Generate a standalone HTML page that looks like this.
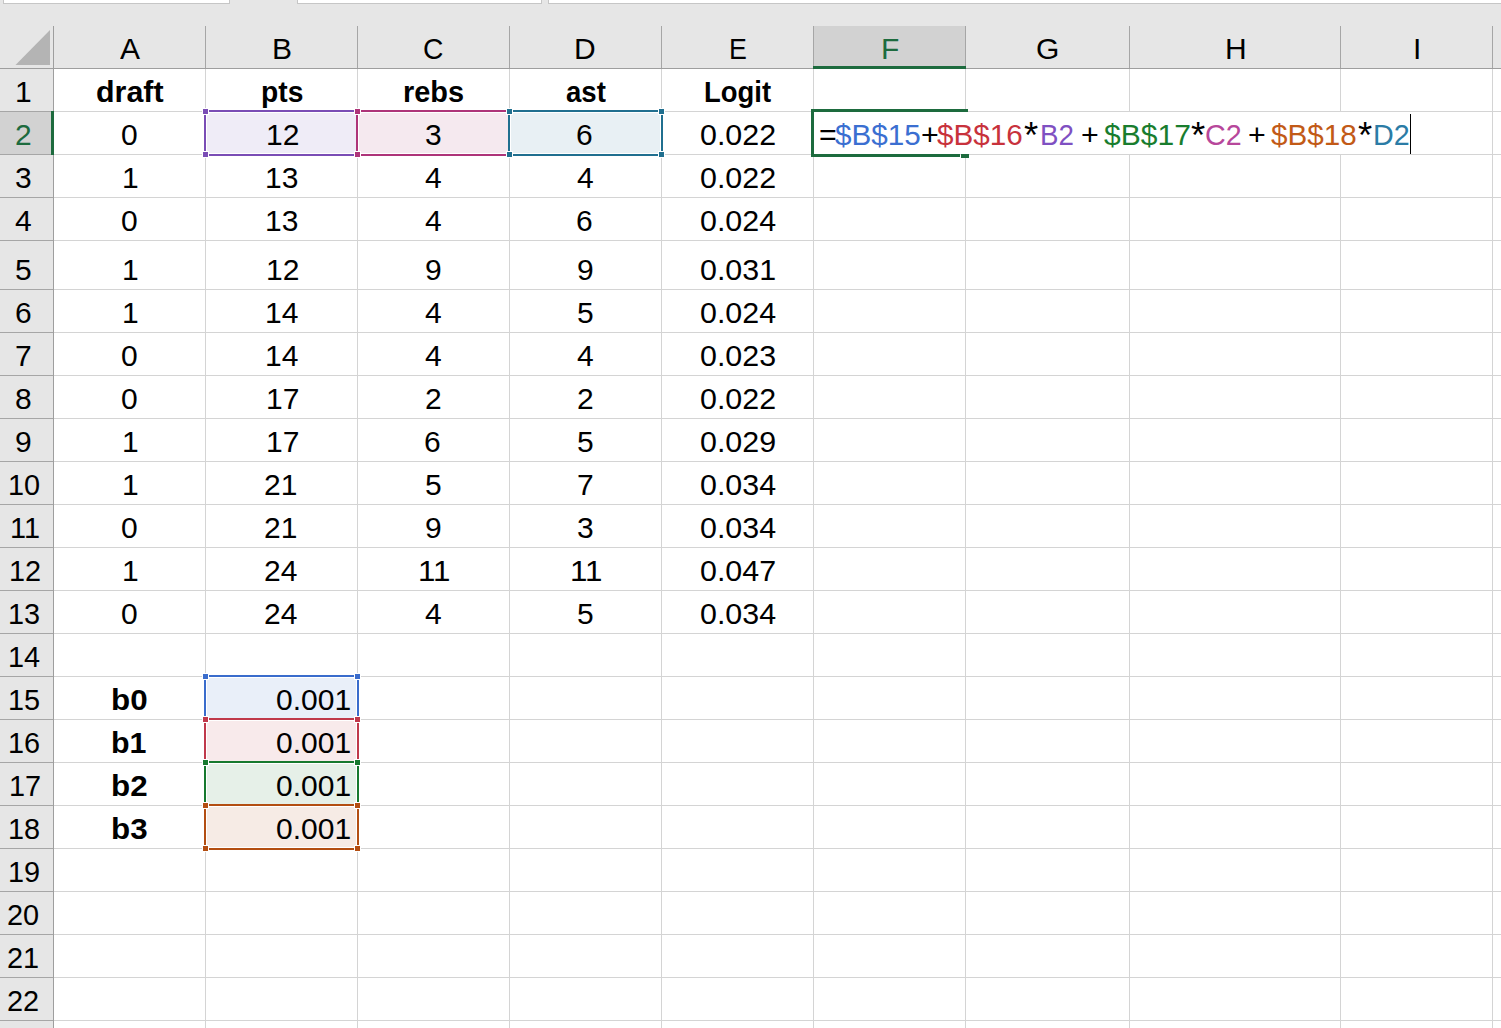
<!DOCTYPE html><html><head><meta charset="utf-8"><style>
*{margin:0;padding:0;box-sizing:border-box}
html,body{width:1501px;height:1028px;overflow:hidden;background:#fff;color:#000;font-family:"Liberation Sans", sans-serif}
div{position:absolute}
.t{font-size:30.4px;line-height:30.4px;white-space:nowrap}
.t span{display:inline-block}
.b{font-weight:bold}
</style></head><body>
<div style="left:0;top:0;width:1501px;height:68px;background:#e6e6e6"></div>
<div style="left:0;top:68px;width:53px;height:960px;background:#e6e6e6"></div>
<div style="left:3px;top:-2px;width:227px;height:6px;background:#fff;border:1px solid #c6c6c6"></div>
<div style="left:297px;top:-2px;width:245px;height:6px;background:#fff;border:1px solid #c6c6c6"></div>
<div style="left:548px;top:-2px;width:973px;height:6px;background:#fff;border:1px solid #c6c6c6"></div>
<div style="left:814px;top:26px;width:151px;height:40px;background:#d2d2d2"></div>
<div style="left:0;top:112px;width:53px;height:42px;background:#d2d2d2"></div>
<div style="left:54px;top:111px;width:1447px;height:1px;background:#d4d4d4"></div>
<div style="left:54px;top:154px;width:1447px;height:1px;background:#d4d4d4"></div>
<div style="left:54px;top:197px;width:1447px;height:1px;background:#d4d4d4"></div>
<div style="left:54px;top:240px;width:1447px;height:1px;background:#d4d4d4"></div>
<div style="left:54px;top:289px;width:1447px;height:1px;background:#d4d4d4"></div>
<div style="left:54px;top:332px;width:1447px;height:1px;background:#d4d4d4"></div>
<div style="left:54px;top:375px;width:1447px;height:1px;background:#d4d4d4"></div>
<div style="left:54px;top:418px;width:1447px;height:1px;background:#d4d4d4"></div>
<div style="left:54px;top:461px;width:1447px;height:1px;background:#d4d4d4"></div>
<div style="left:54px;top:504px;width:1447px;height:1px;background:#d4d4d4"></div>
<div style="left:54px;top:547px;width:1447px;height:1px;background:#d4d4d4"></div>
<div style="left:54px;top:590px;width:1447px;height:1px;background:#d4d4d4"></div>
<div style="left:54px;top:633px;width:1447px;height:1px;background:#d4d4d4"></div>
<div style="left:54px;top:676px;width:1447px;height:1px;background:#d4d4d4"></div>
<div style="left:54px;top:719px;width:1447px;height:1px;background:#d4d4d4"></div>
<div style="left:54px;top:762px;width:1447px;height:1px;background:#d4d4d4"></div>
<div style="left:54px;top:805px;width:1447px;height:1px;background:#d4d4d4"></div>
<div style="left:54px;top:848px;width:1447px;height:1px;background:#d4d4d4"></div>
<div style="left:54px;top:891px;width:1447px;height:1px;background:#d4d4d4"></div>
<div style="left:54px;top:934px;width:1447px;height:1px;background:#d4d4d4"></div>
<div style="left:54px;top:977px;width:1447px;height:1px;background:#d4d4d4"></div>
<div style="left:54px;top:1020px;width:1447px;height:1px;background:#d4d4d4"></div>
<div style="left:205px;top:69px;width:1px;height:959px;background:#d4d4d4"></div>
<div style="left:357px;top:69px;width:1px;height:959px;background:#d4d4d4"></div>
<div style="left:509px;top:69px;width:1px;height:959px;background:#d4d4d4"></div>
<div style="left:661px;top:69px;width:1px;height:959px;background:#d4d4d4"></div>
<div style="left:813px;top:69px;width:1px;height:959px;background:#d4d4d4"></div>
<div style="left:965px;top:69px;width:1px;height:42px;background:#d4d4d4"></div>
<div style="left:965px;top:155px;width:1px;height:873px;background:#d4d4d4"></div>
<div style="left:1129px;top:69px;width:1px;height:42px;background:#d4d4d4"></div>
<div style="left:1129px;top:155px;width:1px;height:873px;background:#d4d4d4"></div>
<div style="left:1340px;top:69px;width:1px;height:42px;background:#d4d4d4"></div>
<div style="left:1340px;top:155px;width:1px;height:873px;background:#d4d4d4"></div>
<div style="left:1492px;top:69px;width:1px;height:959px;background:#d4d4d4"></div>
<div style="left:205px;top:26px;width:1px;height:42px;background:#a6a6a6"></div>
<div style="left:357px;top:26px;width:1px;height:42px;background:#a6a6a6"></div>
<div style="left:509px;top:26px;width:1px;height:42px;background:#a6a6a6"></div>
<div style="left:661px;top:26px;width:1px;height:42px;background:#a6a6a6"></div>
<div style="left:813px;top:26px;width:1px;height:42px;background:#a6a6a6"></div>
<div style="left:965px;top:26px;width:1px;height:42px;background:#a6a6a6"></div>
<div style="left:1129px;top:26px;width:1px;height:42px;background:#a6a6a6"></div>
<div style="left:1340px;top:26px;width:1px;height:42px;background:#a6a6a6"></div>
<div style="left:1492px;top:26px;width:1px;height:42px;background:#a6a6a6"></div>
<div style="left:0;top:111px;width:53px;height:1px;background:#a6a6a6"></div>
<div style="left:0;top:154px;width:53px;height:1px;background:#a6a6a6"></div>
<div style="left:0;top:197px;width:53px;height:1px;background:#a6a6a6"></div>
<div style="left:0;top:240px;width:53px;height:1px;background:#a6a6a6"></div>
<div style="left:0;top:289px;width:53px;height:1px;background:#a6a6a6"></div>
<div style="left:0;top:332px;width:53px;height:1px;background:#a6a6a6"></div>
<div style="left:0;top:375px;width:53px;height:1px;background:#a6a6a6"></div>
<div style="left:0;top:418px;width:53px;height:1px;background:#a6a6a6"></div>
<div style="left:0;top:461px;width:53px;height:1px;background:#a6a6a6"></div>
<div style="left:0;top:504px;width:53px;height:1px;background:#a6a6a6"></div>
<div style="left:0;top:547px;width:53px;height:1px;background:#a6a6a6"></div>
<div style="left:0;top:590px;width:53px;height:1px;background:#a6a6a6"></div>
<div style="left:0;top:633px;width:53px;height:1px;background:#a6a6a6"></div>
<div style="left:0;top:676px;width:53px;height:1px;background:#a6a6a6"></div>
<div style="left:0;top:719px;width:53px;height:1px;background:#a6a6a6"></div>
<div style="left:0;top:762px;width:53px;height:1px;background:#a6a6a6"></div>
<div style="left:0;top:805px;width:53px;height:1px;background:#a6a6a6"></div>
<div style="left:0;top:848px;width:53px;height:1px;background:#a6a6a6"></div>
<div style="left:0;top:891px;width:53px;height:1px;background:#a6a6a6"></div>
<div style="left:0;top:934px;width:53px;height:1px;background:#a6a6a6"></div>
<div style="left:0;top:977px;width:53px;height:1px;background:#a6a6a6"></div>
<div style="left:0;top:1020px;width:53px;height:1px;background:#a6a6a6"></div>
<div style="left:0;top:68px;width:1501px;height:1px;background:#9e9e9e"></div>
<div style="left:53px;top:26px;width:1px;height:1002px;background:#9e9e9e"></div>
<svg style="position:absolute;left:0;top:0" width="60" height="70"><polygon points="15.5,65 50,65 50,30" fill="#b4b4b4"/></svg>
<div style="left:813px;top:66px;width:153px;height:3px;background:#1d6b3e"></div>
<div style="left:51px;top:111px;width:3px;height:44px;background:#1d6b3e"></div>
<div style="left:206px;top:112px;width:151px;height:42px;background:#fff"></div>
<div style="left:207px;top:113px;width:149px;height:40px;background:#efecf7"></div>
<div style="left:204px;top:110px;width:155px;height:46px;border:2px solid #7a4db5"></div>
<div style="left:202px;top:108px;width:7px;height:7px;background:#fff"></div>
<div style="left:203px;top:109px;width:5px;height:5px;background:#7a4db5"></div>
<div style="left:354px;top:108px;width:7px;height:7px;background:#fff"></div>
<div style="left:355px;top:109px;width:5px;height:5px;background:#7a4db5"></div>
<div style="left:202px;top:151px;width:7px;height:7px;background:#fff"></div>
<div style="left:203px;top:152px;width:5px;height:5px;background:#7a4db5"></div>
<div style="left:354px;top:151px;width:7px;height:7px;background:#fff"></div>
<div style="left:355px;top:152px;width:5px;height:5px;background:#7a4db5"></div>
<div style="left:358px;top:112px;width:151px;height:42px;background:#fff"></div>
<div style="left:359px;top:113px;width:149px;height:40px;background:#f5e9ef"></div>
<div style="left:356px;top:110px;width:155px;height:46px;border:2px solid #ae3479"></div>
<div style="left:354px;top:108px;width:7px;height:7px;background:#fff"></div>
<div style="left:355px;top:109px;width:5px;height:5px;background:#ae3479"></div>
<div style="left:506px;top:108px;width:7px;height:7px;background:#fff"></div>
<div style="left:507px;top:109px;width:5px;height:5px;background:#ae3479"></div>
<div style="left:354px;top:151px;width:7px;height:7px;background:#fff"></div>
<div style="left:355px;top:152px;width:5px;height:5px;background:#ae3479"></div>
<div style="left:506px;top:151px;width:7px;height:7px;background:#fff"></div>
<div style="left:507px;top:152px;width:5px;height:5px;background:#ae3479"></div>
<div style="left:510px;top:112px;width:151px;height:42px;background:#fff"></div>
<div style="left:511px;top:113px;width:149px;height:40px;background:#e8f0f4"></div>
<div style="left:508px;top:110px;width:155px;height:46px;border:2px solid #206f8f"></div>
<div style="left:506px;top:108px;width:7px;height:7px;background:#fff"></div>
<div style="left:507px;top:109px;width:5px;height:5px;background:#206f8f"></div>
<div style="left:658px;top:108px;width:7px;height:7px;background:#fff"></div>
<div style="left:659px;top:109px;width:5px;height:5px;background:#206f8f"></div>
<div style="left:506px;top:151px;width:7px;height:7px;background:#fff"></div>
<div style="left:507px;top:152px;width:5px;height:5px;background:#206f8f"></div>
<div style="left:658px;top:151px;width:7px;height:7px;background:#fff"></div>
<div style="left:659px;top:152px;width:5px;height:5px;background:#206f8f"></div>
<div style="left:206px;top:677px;width:151px;height:42px;background:#fff"></div>
<div style="left:207px;top:678px;width:149px;height:40px;background:#e9eff9"></div>
<div style="left:204px;top:675px;width:155px;height:46px;border:2px solid #3a6ccc"></div>
<div style="left:202px;top:673px;width:7px;height:7px;background:#fff"></div>
<div style="left:203px;top:674px;width:5px;height:5px;background:#3a6ccc"></div>
<div style="left:354px;top:673px;width:7px;height:7px;background:#fff"></div>
<div style="left:355px;top:674px;width:5px;height:5px;background:#3a6ccc"></div>
<div style="left:202px;top:716px;width:7px;height:7px;background:#fff"></div>
<div style="left:203px;top:717px;width:5px;height:5px;background:#3a6ccc"></div>
<div style="left:354px;top:716px;width:7px;height:7px;background:#fff"></div>
<div style="left:355px;top:717px;width:5px;height:5px;background:#3a6ccc"></div>
<div style="left:206px;top:720px;width:151px;height:42px;background:#fff"></div>
<div style="left:207px;top:721px;width:149px;height:40px;background:#f8eaeb"></div>
<div style="left:204px;top:718px;width:155px;height:46px;border:2px solid #c0394b"></div>
<div style="left:202px;top:716px;width:7px;height:7px;background:#fff"></div>
<div style="left:203px;top:717px;width:5px;height:5px;background:#c0394b"></div>
<div style="left:354px;top:716px;width:7px;height:7px;background:#fff"></div>
<div style="left:355px;top:717px;width:5px;height:5px;background:#c0394b"></div>
<div style="left:202px;top:759px;width:7px;height:7px;background:#fff"></div>
<div style="left:203px;top:760px;width:5px;height:5px;background:#c0394b"></div>
<div style="left:354px;top:759px;width:7px;height:7px;background:#fff"></div>
<div style="left:355px;top:760px;width:5px;height:5px;background:#c0394b"></div>
<div style="left:206px;top:763px;width:151px;height:42px;background:#fff"></div>
<div style="left:207px;top:764px;width:149px;height:40px;background:#e6f0e8"></div>
<div style="left:204px;top:761px;width:155px;height:46px;border:2px solid #17792e"></div>
<div style="left:202px;top:759px;width:7px;height:7px;background:#fff"></div>
<div style="left:203px;top:760px;width:5px;height:5px;background:#17792e"></div>
<div style="left:354px;top:759px;width:7px;height:7px;background:#fff"></div>
<div style="left:355px;top:760px;width:5px;height:5px;background:#17792e"></div>
<div style="left:202px;top:802px;width:7px;height:7px;background:#fff"></div>
<div style="left:203px;top:803px;width:5px;height:5px;background:#17792e"></div>
<div style="left:354px;top:802px;width:7px;height:7px;background:#fff"></div>
<div style="left:355px;top:803px;width:5px;height:5px;background:#17792e"></div>
<div style="left:206px;top:806px;width:151px;height:42px;background:#fff"></div>
<div style="left:207px;top:807px;width:149px;height:40px;background:#f6ebe5"></div>
<div style="left:204px;top:804px;width:155px;height:46px;border:2px solid #b34e12"></div>
<div style="left:202px;top:802px;width:7px;height:7px;background:#fff"></div>
<div style="left:203px;top:803px;width:5px;height:5px;background:#b34e12"></div>
<div style="left:354px;top:802px;width:7px;height:7px;background:#fff"></div>
<div style="left:355px;top:803px;width:5px;height:5px;background:#b34e12"></div>
<div style="left:202px;top:845px;width:7px;height:7px;background:#fff"></div>
<div style="left:203px;top:846px;width:5px;height:5px;background:#b34e12"></div>
<div style="left:354px;top:845px;width:7px;height:7px;background:#fff"></div>
<div style="left:355px;top:846px;width:5px;height:5px;background:#b34e12"></div>
<div style="left:119.63px;top:33px;transform:scaleX(0.987);transform-origin:0 0;color:#000"><span class="t">A</span></div>
<div style="left:271.64px;top:33px;transform:scaleX(0.987);transform-origin:0 0;color:#000"><span class="t">B</span></div>
<div style="left:423.31px;top:33px;transform:scaleX(0.93);transform-origin:0 0;color:#000"><span class="t">C</span></div>
<div style="left:574.15px;top:33px;transform:scaleX(0.987);transform-origin:0 0;color:#000"><span class="t">D</span></div>
<div style="left:729.26px;top:33px;transform:scaleX(0.88);transform-origin:0 0;color:#000"><span class="t">E</span></div>
<div style="left:880.62px;top:33px;transform:scaleX(0.987);transform-origin:0 0;color:#1d6b3e"><span class="t">F</span></div>
<div style="left:1036.15px;top:33px;transform:scaleX(0.987);transform-origin:0 0;color:#000"><span class="t">G</span></div>
<div style="left:1224.64px;top:33px;transform:scaleX(0.987);transform-origin:0 0;color:#000"><span class="t">H</span></div>
<div style="left:1412.56px;top:33px;transform:scaleX(0.987);transform-origin:0 0;color:#000"><span class="t">I</span></div>
<div style="left:14.62px;top:76px;transform:scaleX(0.987);transform-origin:0 0;color:#000"><span class="t">1</span></div>
<div style="left:15.11px;top:119px;transform:scaleX(0.987);transform-origin:0 0;color:#1d6b3e"><span class="t">2</span></div>
<div style="left:15.11px;top:162px;transform:scaleX(0.987);transform-origin:0 0;color:#000"><span class="t">3</span></div>
<div style="left:15.11px;top:205px;transform:scaleX(0.987);transform-origin:0 0;color:#000"><span class="t">4</span></div>
<div style="left:15.11px;top:254px;transform:scaleX(0.987);transform-origin:0 0;color:#000"><span class="t">5</span></div>
<div style="left:14.62px;top:297px;transform:scaleX(0.987);transform-origin:0 0;color:#000"><span class="t">6</span></div>
<div style="left:15.11px;top:340px;transform:scaleX(0.987);transform-origin:0 0;color:#000"><span class="t">7</span></div>
<div style="left:15.11px;top:383px;transform:scaleX(0.987);transform-origin:0 0;color:#000"><span class="t">8</span></div>
<div style="left:15.11px;top:426px;transform:scaleX(0.987);transform-origin:0 0;color:#000"><span class="t">9</span></div>
<div style="left:8.38px;top:469px;transform:scaleX(0.95);transform-origin:0 0;color:#000"><span class="t">10</span></div>
<div style="left:9.80px;top:512px;transform:scaleX(0.95);transform-origin:0 0;color:#000"><span class="t">11</span></div>
<div style="left:8.85px;top:555px;transform:scaleX(0.95);transform-origin:0 0;color:#000"><span class="t">12</span></div>
<div style="left:8.38px;top:598px;transform:scaleX(0.95);transform-origin:0 0;color:#000"><span class="t">13</span></div>
<div style="left:8.38px;top:641px;transform:scaleX(0.95);transform-origin:0 0;color:#000"><span class="t">14</span></div>
<div style="left:8.38px;top:684px;transform:scaleX(0.95);transform-origin:0 0;color:#000"><span class="t">15</span></div>
<div style="left:8.38px;top:727px;transform:scaleX(0.95);transform-origin:0 0;color:#000"><span class="t">16</span></div>
<div style="left:8.85px;top:770px;transform:scaleX(0.95);transform-origin:0 0;color:#000"><span class="t">17</span></div>
<div style="left:8.38px;top:813px;transform:scaleX(0.95);transform-origin:0 0;color:#000"><span class="t">18</span></div>
<div style="left:8.38px;top:856px;transform:scaleX(0.95);transform-origin:0 0;color:#000"><span class="t">19</span></div>
<div style="left:6.62px;top:899px;transform:scaleX(0.95);transform-origin:0 0;color:#000"><span class="t">20</span></div>
<div style="left:6.62px;top:942px;transform:scaleX(0.95);transform-origin:0 0;color:#000"><span class="t">21</span></div>
<div style="left:7.10px;top:985px;transform:scaleX(0.95);transform-origin:0 0;color:#000"><span class="t">22</span></div>
<div style="left:96.00px;top:76px;transform:scale(1.0000,1.0);transform-origin:0 0;color:#000"><span class="t b">draft</span></div>
<div style="left:261.14px;top:76px;transform:scale(0.9286,1.0);transform-origin:0 0;color:#000"><span class="t b">pts</span></div>
<div style="left:403.10px;top:76px;transform:scale(0.9508,1.0);transform-origin:0 0;color:#000"><span class="t b">rebs</span></div>
<div style="left:566.09px;top:76px;transform:scale(0.9070,1.0);transform-origin:0 0;color:#000"><span class="t b">ast</span></div>
<div style="left:704.19px;top:76px;transform:scale(0.9028,1.0);transform-origin:0 0;color:#000"><span class="t b">Logit</span></div>
<div style="left:120.61px;top:119px;transform:scaleX(0.987);transform-origin:0 0;color:#000"><span class="t">0</span></div>
<div style="left:265.72px;top:119px;transform:scaleX(0.987);transform-origin:0 0;color:#000"><span class="t">12</span></div>
<div style="left:424.61px;top:119px;transform:scaleX(0.987);transform-origin:0 0;color:#000"><span class="t">3</span></div>
<div style="left:576.12px;top:119px;transform:scaleX(0.987);transform-origin:0 0;color:#000"><span class="t">6</span></div>
<div style="left:700.00px;top:119px;transform:scaleX(1.0);transform-origin:0 0;color:#000"><span class="t">0.022</span></div>
<div style="left:121.62px;top:162px;transform:scaleX(0.987);transform-origin:0 0;color:#000"><span class="t">1</span></div>
<div style="left:265.23px;top:162px;transform:scaleX(0.987);transform-origin:0 0;color:#000"><span class="t">13</span></div>
<div style="left:424.61px;top:162px;transform:scaleX(0.987);transform-origin:0 0;color:#000"><span class="t">4</span></div>
<div style="left:576.61px;top:162px;transform:scaleX(0.987);transform-origin:0 0;color:#000"><span class="t">4</span></div>
<div style="left:700.00px;top:162px;transform:scaleX(1.0);transform-origin:0 0;color:#000"><span class="t">0.022</span></div>
<div style="left:120.61px;top:205px;transform:scaleX(0.987);transform-origin:0 0;color:#000"><span class="t">0</span></div>
<div style="left:265.23px;top:205px;transform:scaleX(0.987);transform-origin:0 0;color:#000"><span class="t">13</span></div>
<div style="left:424.61px;top:205px;transform:scaleX(0.987);transform-origin:0 0;color:#000"><span class="t">4</span></div>
<div style="left:576.12px;top:205px;transform:scaleX(0.987);transform-origin:0 0;color:#000"><span class="t">6</span></div>
<div style="left:700.00px;top:205px;transform:scaleX(1.0);transform-origin:0 0;color:#000"><span class="t">0.024</span></div>
<div style="left:121.62px;top:254px;transform:scaleX(0.987);transform-origin:0 0;color:#000"><span class="t">1</span></div>
<div style="left:265.72px;top:254px;transform:scaleX(0.987);transform-origin:0 0;color:#000"><span class="t">12</span></div>
<div style="left:424.61px;top:254px;transform:scaleX(0.987);transform-origin:0 0;color:#000"><span class="t">9</span></div>
<div style="left:576.61px;top:254px;transform:scaleX(0.987);transform-origin:0 0;color:#000"><span class="t">9</span></div>
<div style="left:700.00px;top:254px;transform:scaleX(1.0);transform-origin:0 0;color:#000"><span class="t">0.031</span></div>
<div style="left:121.62px;top:297px;transform:scaleX(0.987);transform-origin:0 0;color:#000"><span class="t">1</span></div>
<div style="left:265.23px;top:297px;transform:scaleX(0.987);transform-origin:0 0;color:#000"><span class="t">14</span></div>
<div style="left:424.61px;top:297px;transform:scaleX(0.987);transform-origin:0 0;color:#000"><span class="t">4</span></div>
<div style="left:576.61px;top:297px;transform:scaleX(0.987);transform-origin:0 0;color:#000"><span class="t">5</span></div>
<div style="left:700.00px;top:297px;transform:scaleX(1.0);transform-origin:0 0;color:#000"><span class="t">0.024</span></div>
<div style="left:120.61px;top:340px;transform:scaleX(0.987);transform-origin:0 0;color:#000"><span class="t">0</span></div>
<div style="left:265.23px;top:340px;transform:scaleX(0.987);transform-origin:0 0;color:#000"><span class="t">14</span></div>
<div style="left:424.61px;top:340px;transform:scaleX(0.987);transform-origin:0 0;color:#000"><span class="t">4</span></div>
<div style="left:576.61px;top:340px;transform:scaleX(0.987);transform-origin:0 0;color:#000"><span class="t">4</span></div>
<div style="left:700.00px;top:340px;transform:scaleX(1.0);transform-origin:0 0;color:#000"><span class="t">0.023</span></div>
<div style="left:120.61px;top:383px;transform:scaleX(0.987);transform-origin:0 0;color:#000"><span class="t">0</span></div>
<div style="left:265.72px;top:383px;transform:scaleX(0.987);transform-origin:0 0;color:#000"><span class="t">17</span></div>
<div style="left:424.61px;top:383px;transform:scaleX(0.987);transform-origin:0 0;color:#000"><span class="t">2</span></div>
<div style="left:576.61px;top:383px;transform:scaleX(0.987);transform-origin:0 0;color:#000"><span class="t">2</span></div>
<div style="left:700.00px;top:383px;transform:scaleX(1.0);transform-origin:0 0;color:#000"><span class="t">0.022</span></div>
<div style="left:121.62px;top:426px;transform:scaleX(0.987);transform-origin:0 0;color:#000"><span class="t">1</span></div>
<div style="left:265.72px;top:426px;transform:scaleX(0.987);transform-origin:0 0;color:#000"><span class="t">17</span></div>
<div style="left:424.12px;top:426px;transform:scaleX(0.987);transform-origin:0 0;color:#000"><span class="t">6</span></div>
<div style="left:576.61px;top:426px;transform:scaleX(0.987);transform-origin:0 0;color:#000"><span class="t">5</span></div>
<div style="left:700.00px;top:426px;transform:scaleX(1.0);transform-origin:0 0;color:#000"><span class="t">0.029</span></div>
<div style="left:121.62px;top:469px;transform:scaleX(0.987);transform-origin:0 0;color:#000"><span class="t">1</span></div>
<div style="left:263.73px;top:469px;transform:scaleX(0.987);transform-origin:0 0;color:#000"><span class="t">21</span></div>
<div style="left:424.61px;top:469px;transform:scaleX(0.987);transform-origin:0 0;color:#000"><span class="t">5</span></div>
<div style="left:576.61px;top:469px;transform:scaleX(0.987);transform-origin:0 0;color:#000"><span class="t">7</span></div>
<div style="left:700.00px;top:469px;transform:scaleX(1.0);transform-origin:0 0;color:#000"><span class="t">0.034</span></div>
<div style="left:120.61px;top:512px;transform:scaleX(0.987);transform-origin:0 0;color:#000"><span class="t">0</span></div>
<div style="left:263.73px;top:512px;transform:scaleX(0.987);transform-origin:0 0;color:#000"><span class="t">21</span></div>
<div style="left:424.61px;top:512px;transform:scaleX(0.987);transform-origin:0 0;color:#000"><span class="t">9</span></div>
<div style="left:576.61px;top:512px;transform:scaleX(0.987);transform-origin:0 0;color:#000"><span class="t">3</span></div>
<div style="left:700.00px;top:512px;transform:scaleX(1.0);transform-origin:0 0;color:#000"><span class="t">0.034</span></div>
<div style="left:121.62px;top:555px;transform:scaleX(0.987);transform-origin:0 0;color:#000"><span class="t">1</span></div>
<div style="left:263.73px;top:555px;transform:scaleX(0.987);transform-origin:0 0;color:#000"><span class="t">24</span></div>
<div style="left:418.02px;top:555px;transform:scaleX(1.03);transform-origin:0 0;color:#000"><span class="t">11</span></div>
<div style="left:570.02px;top:555px;transform:scaleX(1.03);transform-origin:0 0;color:#000"><span class="t">11</span></div>
<div style="left:700.00px;top:555px;transform:scaleX(1.0);transform-origin:0 0;color:#000"><span class="t">0.047</span></div>
<div style="left:120.61px;top:598px;transform:scaleX(0.987);transform-origin:0 0;color:#000"><span class="t">0</span></div>
<div style="left:263.73px;top:598px;transform:scaleX(0.987);transform-origin:0 0;color:#000"><span class="t">24</span></div>
<div style="left:424.61px;top:598px;transform:scaleX(0.987);transform-origin:0 0;color:#000"><span class="t">4</span></div>
<div style="left:576.61px;top:598px;transform:scaleX(0.987);transform-origin:0 0;color:#000"><span class="t">5</span></div>
<div style="left:700.00px;top:598px;transform:scaleX(1.0);transform-origin:0 0;color:#000"><span class="t">0.034</span></div>
<div style="left:110.94px;top:684px;transform:scale(1.0312,1.0);transform-origin:0 0;color:#000"><span class="t b">b0</span></div>
<div style="left:275.98px;top:684px;transform:scaleX(0.987);transform-origin:0 0;color:#000"><span class="t">0.001</span></div>
<div style="left:111.00px;top:727px;transform:scale(1.0000,1.0);transform-origin:0 0;color:#000"><span class="t b">b1</span></div>
<div style="left:275.98px;top:727px;transform:scaleX(0.987);transform-origin:0 0;color:#000"><span class="t">0.001</span></div>
<div style="left:110.94px;top:770px;transform:scale(1.0312,1.0);transform-origin:0 0;color:#000"><span class="t b">b2</span></div>
<div style="left:275.98px;top:770px;transform:scaleX(0.987);transform-origin:0 0;color:#000"><span class="t">0.001</span></div>
<div style="left:110.94px;top:813px;transform:scale(1.0312,1.0);transform-origin:0 0;color:#000"><span class="t b">b3</span></div>
<div style="left:275.98px;top:813px;transform:scaleX(0.987);transform-origin:0 0;color:#000"><span class="t">0.001</span></div>
<div style="left:811px;top:109px;width:157px;height:3px;background:#1d6b3e"></div>
<div style="left:811px;top:109px;width:3px;height:48px;background:#1d6b3e"></div>
<div style="left:811px;top:154px;width:149px;height:3px;background:#1d6b3e"></div>
<div style="left:961px;top:154px;width:8px;height:4px;background:#1d6b3e"></div>
<div style="left:819.00px;top:119px;transform:scale(1.0000,1.0);transform-origin:0 0;color:#000"><span class="t">=</span></div>
<div style="left:835.02px;top:119px;transform:scale(0.9767,1.0);transform-origin:0 0;color:#3b6fd1"><span class="t">$B$15</span></div>
<div style="left:921.00px;top:119px;transform:scale(1.0000,1.0);transform-origin:0 0;color:#000"><span class="t">+</span></div>
<div style="left:937.02px;top:119px;transform:scale(0.9767,1.0);transform-origin:0 0;color:#c8323c"><span class="t">$B$16</span></div>
<div style="left:1023.80px;top:117px;transform:scale(1.2000,1.2);transform-origin:0 0;color:#000"><span class="t">*</span></div>
<div style="left:1040.18px;top:119px;transform:scale(0.9118,1.0);transform-origin:0 0;color:#7f50c2"><span class="t">B2</span></div>
<div style="left:1081.00px;top:119px;transform:scale(1.0000,1.0);transform-origin:0 0;color:#000"><span class="t">+</span></div>
<div style="left:1104.01px;top:119px;transform:scale(0.9882,1.0);transform-origin:0 0;color:#197d2e"><span class="t">$B$17</span></div>
<div style="left:1190.80px;top:117px;transform:scale(1.2000,1.2);transform-origin:0 0;color:#000"><span class="t">*</span></div>
<div style="left:1205.11px;top:119px;transform:scale(0.9429,1.0);transform-origin:0 0;color:#b7479b"><span class="t">C2</span></div>
<div style="left:1248.00px;top:119px;transform:scale(1.0000,1.0);transform-origin:0 0;color:#000"><span class="t">+</span></div>
<div style="left:1271.02px;top:119px;transform:scale(0.9767,1.0);transform-origin:0 0;color:#c25a17"><span class="t">$B$18</span></div>
<div style="left:1357.80px;top:117px;transform:scale(1.2000,1.2);transform-origin:0 0;color:#000"><span class="t">*</span></div>
<div style="left:1373.11px;top:119px;transform:scale(0.9429,1.0);transform-origin:0 0;color:#2b7ca6"><span class="t">D2</span></div>
<div style="left:1410px;top:114px;width:1px;height:40px;background:#000"></div>
</body></html>
